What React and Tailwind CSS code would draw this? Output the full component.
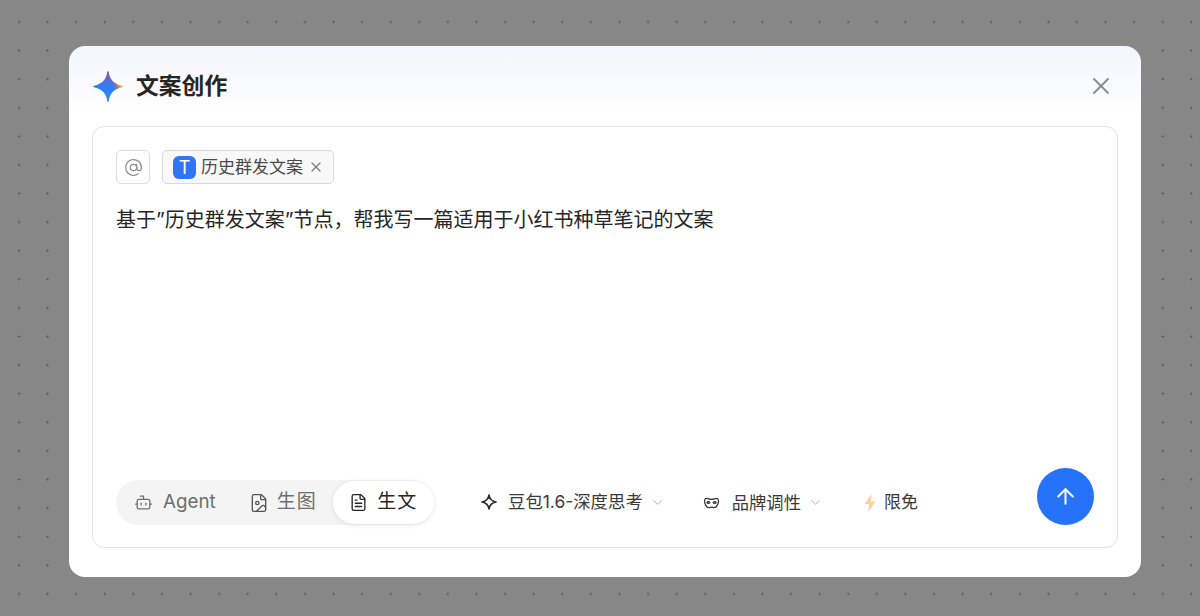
import React from 'react';
import { X, AtSign, Bot, FileImage, FileText, ChevronDown, ArrowUp } from 'lucide-react';

const starPath = 'M16 0.500C17.500 8 20 13.500 31.500 16.500C20 19.500 17.500 25 16 32.500C14.500 25 12 19.500 0.500 16.500C12 13.500 14.500 8 16 0.500Z';

const Logo = () => (
  <svg width="32" height="33" viewBox="-1 -1 34 35">
    <defs>
      <linearGradient id="star" x1="0.2" y1="0.7" x2="0.95" y2="0.35">
        <stop offset="0.6" stopColor="#2f7ff8" />
        <stop offset="0.74" stopColor="#8a6fa8" />
        <stop offset="0.88" stopColor="#f5a623" />
      </linearGradient>
      <linearGradient id="top" x1="0" y1="0" x2="0" y2="1">
        <stop offset="0" stopColor="#8c4a6a" />
        <stop offset="0.3" stopColor="#7a5fc0" stopOpacity="0.7" />
        <stop offset="0.5" stopColor="#2f7ff8" stopOpacity="0" />
      </linearGradient>
    </defs>
    <path d={starPath} fill="url(#star)" stroke="url(#star)" strokeWidth="1" strokeLinejoin="round" />
    <path d={starPath} fill="url(#top)" />
  </svg>
);

const Sparkle = () => (
  <svg width="18" height="18" viewBox="0 0 18 18" fill="none" stroke="#2b2b2b" strokeWidth="1.700" strokeLinejoin="round">
    <path d="M9 2C9.500 6 11 8 16 9C11 10 9.500 12 9 16C8.500 12 7 10 2 9C7 8 8.500 6 9 2Z" />
  </svg>
);

const Mask = () => (
  <svg width="17" height="12" viewBox="0 0 18 13" fill="none" stroke="#333" strokeWidth="1.300" strokeLinejoin="round">
    <path d="M3.500 1.500C5 1.500 7 2.500 9 2.500C11 2.500 13 1.500 14.500 1.500C16.500 1.500 17 4 16.200 6.500C15.500 9.500 13.500 11.500 11.500 11.500C10.500 11.500 9.800 11 9 11C8.200 11 7.500 11.500 6.500 11.500C4.500 11.500 2.500 9.500 1.800 6.500C1 4 1.500 1.500 3.500 1.500Z" />
    <path d="M4 6C4.500 4.700 6.500 4.700 7.300 6C6.500 7.300 4.500 7.300 4 6Z" />
    <path d="M14 6C13.500 4.700 11.500 4.700 10.700 6C11.500 7.300 13.500 7.300 14 6Z" />
  </svg>
);

const Bolt = () => (
  <svg width="14" height="20" viewBox="0 0 14 20">
    <path d="M8.500 1L1.500 11H6L5.500 19L12.500 8.500H8Z" fill="#fbd29a" />
  </svg>
);

export default function App() {
  return (
    <div className="h-[616px] w-[1200px] overflow-hidden bg-[#878787] bg-[radial-gradient(circle,#565656_0.8px,transparent_1.3px)] bg-[size:28.6px_28.6px] bg-[position:4.7px_7.7px] pl-[69px] pt-[46px] font-['Inter','Noto_Sans_CJK_SC',sans-serif]">
      <div className="flex h-[531px] w-[1072px] flex-col rounded-[16px] bg-white bg-gradient-to-b from-[#f4f5fe] to-white to-[68px] bg-no-repeat px-[23px] pb-[29px]">
        <div className="flex h-[80px] items-center justify-between">
          <div className="flex items-center gap-[12px]">
            <Logo />
            <span className="text-[22.800px] font-bold text-[#262626]">文案创作</span>
          </div>
          <X className="mr-[3px] h-[28px] w-[28px] text-[#8c8c8c]" strokeWidth={1.600} />
        </div>

        <div className="flex flex-1 flex-col rounded-[12px] border border-[#e3e3e3] bg-white pb-[16px] pl-[23px] pr-[23px] pt-[23px]">
          <div className="flex items-center gap-[12px]">
            <div className="flex h-[34px] w-[34px] items-center justify-center rounded-[5px] border border-[#dcdcdc]">
              <AtSign className="h-[19px] w-[19px] text-[#8c8c8c]" strokeWidth={1.500} />
            </div>
            <div className="flex h-[34px] w-[172px] items-center rounded-[5px] border border-[#d9d9d9] bg-[#f8f8f8] pl-[10px]">
              <div className="flex h-[23px] w-[23px] items-center justify-center rounded-[6px] bg-[#2f76f6] text-[18px] font-normal text-white">T</div>
              <span className="ml-[5px] translate-y-[1px] text-[17px] text-[#4a4a4a]">历史群发文案</span>
              <X className="ml-[5px] h-[16px] w-[16px] text-[#7a7a7a]" strokeWidth={1.800} />
            </div>
          </div>

          <p className="mt-[22px] text-[20px] leading-[28px] text-[#262626]">基于”历史群发文案”节点，帮我写一篇适用于小红书种草笔记的文案</p>

          <div className="mt-auto flex items-center">
            <div className="flex h-[45px] w-[318px] items-center rounded-full bg-[#f4f4f4] pl-[18px]">
              <Bot className="h-[19px] w-[19px] text-[#6e6e6e]" strokeWidth={1.600} />
              <span className="ml-[10px] text-[18.800px] text-[#6e6e6e]">Agent</span>
              <FileImage className="ml-[33px] h-[20px] w-[20px] text-[#555]" strokeWidth={1.600} />
              <span className="ml-[8px] text-[19px] tracking-[1px] text-[#6e6e6e]">生图</span>
              <div className="ml-[16px] flex h-[43px] w-[101px] items-center justify-center gap-[9px] rounded-full bg-white shadow-[0_1px_5px_rgba(0,0,0,0.1)]">
                <FileText className="h-[19px] w-[19px] text-[#262626]" strokeWidth={1.700} />
                <span className="text-[19px] tracking-[1px] text-[#262626]">生文</span>
              </div>
            </div>

            <div className="ml-[46px] flex items-center">
              <Sparkle />
              <span className="ml-[10px] text-[17.400px] text-[#3a3a3a]">豆包1.6-深度思考</span>
              <ChevronDown className="ml-[7px] h-[15px] w-[15px] text-[#b5b5b5]" strokeWidth={1.600} />
            </div>

            <div className="ml-[38px] flex items-center">
              <Mask />
              <span className="ml-[12px] text-[17.300px] text-[#3a3a3a]">品牌调性</span>
              <ChevronDown className="ml-[7px] h-[15px] w-[15px] text-[#b5b5b5]" strokeWidth={1.600} />
            </div>

            <div className="ml-[40px] flex items-center">
              <Bolt />
              <span className="ml-[7px] text-[17px] text-[#3a3a3a]">限免</span>
            </div>

            <button className="ml-auto flex h-[57px] w-[57px] -translate-y-[6px] items-center justify-center rounded-full bg-[#2673fa]">
              <ArrowUp className="h-[25px] w-[25px] text-[#f0f5ff]" strokeWidth={2} />
            </button>
          </div>
        </div>
      </div>
    </div>
  );
}
